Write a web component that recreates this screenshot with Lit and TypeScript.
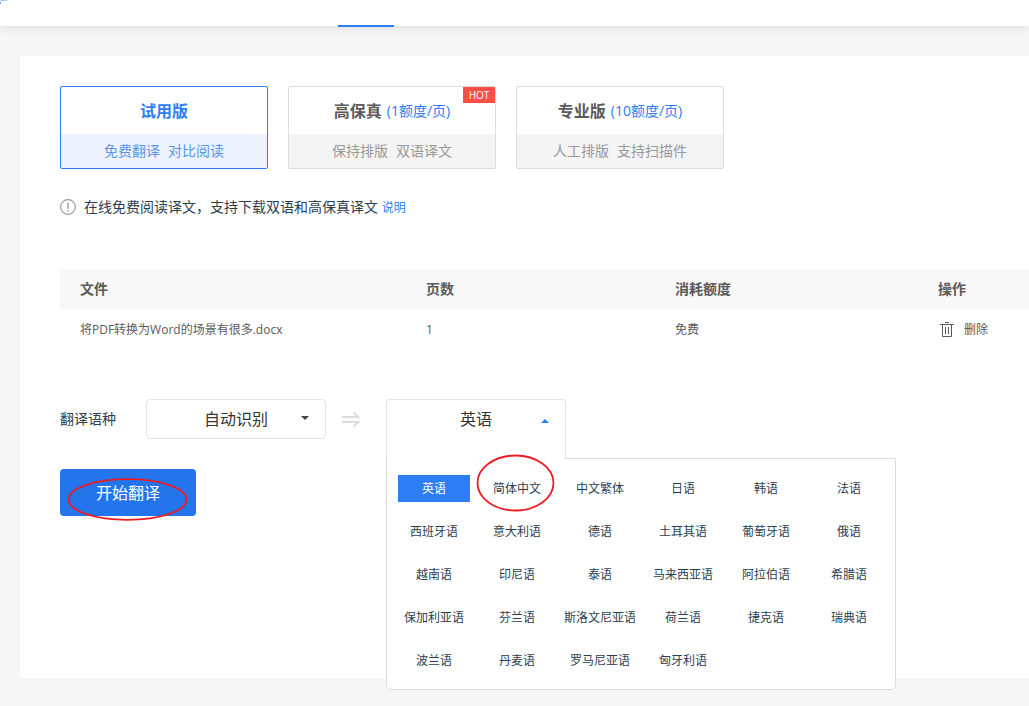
import { LitElement, html, css } from "lit";
import { customElement, state } from "lit/decorators.js";
import { classMap } from "lit/directives/class-map.js";

interface Plan {
  id: string;
  name: string;
  price?: string;
  features: string[];
  hot?: boolean;
}

const PLANS: Plan[] = [
  { id: "trial", name: "试用版", features: ["免费翻译", "对比阅读"] },
  { id: "hifi", name: "高保真", price: "(1额度/页)", features: ["保持排版", "双语译文"], hot: true },
  { id: "pro", name: "专业版", price: "(10额度/页)", features: ["人工排版", "支持扫描件"] },
];

const LANGUAGES = [
  "英语", "简体中文", "中文繁体", "日语", "韩语", "法语",
  "西班牙语", "意大利语", "德语", "土耳其语", "葡萄牙语", "俄语",
  "越南语", "印尼语", "泰语", "马来西亚语", "阿拉伯语", "希腊语",
  "保加利亚语", "芬兰语", "斯洛文尼亚语", "荷兰语", "捷克语", "瑞典语",
  "波兰语", "丹麦语", "罗马尼亚语", "匈牙利语",
];

const base = css`
  *, *::before, *::after { box-sizing: border-box; }
  button, select { font: inherit; color: inherit; margin: 0; padding: 0; cursor: pointer; }
  svg { display: block; flex: none; }
`;

@customElement("plan-picker")
export class PlanPicker extends LitElement {
  @state() private active = "trial";

  static styles = [base, css`
    :host { display: flex; gap: 20px; }
    .card {
      position: relative;
      width: 208px;
      border: 1px solid #ddd;
      border-radius: 2px;
      background: #fff;
      overflow: hidden;
    }
    .title {
      display: flex;
      align-items: center;
      justify-content: center;
      gap: 5px;
      height: 47px;
      font-size: 16px;
      font-weight: 700;
      color: #5a5a5a;
    }
    .price { font-size: 14px; font-weight: 400; color: #2c7df6; }
    .features {
      display: flex;
      align-items: center;
      justify-content: center;
      gap: 8px;
      height: 34px;
      font-size: 14px;
      color: #999;
      background: #f4f4f4;
    }
    .active { border-color: #2c7df6; }
    .active .title { color: #2c7df6; }
    .active .features { color: #5c94ea; background: #edf4ff; }
    .hot {
      position: absolute;
      top: 0;
      right: 0;
      width: 32px;
      height: 16px;
      font-size: 10px;
      line-height: 16px;
      color: #fff;
      background: #fb4f46;
    }
  `];

  render() {
    return PLANS.map((p) => html`
      <button
        class=${classMap({ card: true, active: p.id === this.active })}
        aria-pressed=${p.id === this.active}
        @click=${() => (this.active = p.id)}
      >
        <span class="title">${p.name}${p.price ? html`<span class="price">${p.price}</span>` : ""}</span>
        <span class="features">${p.features.map((f) => html`<span>${f}</span>`)}</span>
        ${p.hot ? html`<span class="hot">HOT</span>` : ""}
      </button>
    `);
  }
}

@customElement("language-menu")
export class LanguageMenu extends LitElement {
  @state() private value = "英语";
  @state() private open = true;

  static styles = [base, css`
    :host { display: block; position: relative; width: 180px; height: 40px; }
    .trigger {
      display: grid;
      grid-template-columns: 1fr auto 1fr;
      align-items: center;
      width: 100%;
      height: 40px;
      font-size: 16px;
      line-height: 38px;
      color: #333;
      background: #fff;
      border: 1px solid #e4e4e4;
      border-radius: 4px;
    }
    .open {
      height: 60px;
      padding-bottom: 22px;
      border-bottom: 0;
      border-radius: 4px 4px 0 0;
    }
    .caption { grid-column: 2; }
    .caret { justify-self: end; margin: 4px 16px 0 0; }
    .menu {
      position: absolute;
      z-index: 1;
      top: 59px;
      left: 0;
      display: grid;
      grid-template-columns: repeat(6, 72px);
      grid-auto-rows: 27px;
      gap: 16px 11px;
      padding: 16px 10px 15px 11px;
      background: #fff;
      border: 1px solid #ddd;
      border-radius: 0 0 5px 5px;
    }
    /* opens the menu's top border below the trigger */
    .menu::before {
      content: "";
      position: absolute;
      top: -1px;
      left: 0;
      width: 178px;
      height: 1px;
      background: #fff;
    }
    .option {
      position: relative;
      border: 0;
      background: none;
      font-size: 12px;
      line-height: 27px;
      color: #2c3e50;
      white-space: nowrap;
    }
    .selected { color: #fff; background: #2c7df6; }
    .ring { position: absolute; top: -21px; left: -5px; pointer-events: none; }
  `];

  private pick(lang: string) {
    this.value = lang;
    this.open = false;
  }

  render() {
    return html`
      <button
        class=${classMap({ trigger: true, open: this.open })}
        aria-haspopup="listbox"
        aria-label="目标语种"
        aria-expanded=${this.open}
        @click=${() => (this.open = !this.open)}
      >
        <span class="caption">${this.value}</span>
        <svg class="caret" width="8" height="4" viewBox="0 0 8 4" aria-hidden="true">
          <path d="M0 4 4 0 8 4z" fill="#2c7df6" />
        </svg>
      </button>
      ${this.open
        ? html`<div class="menu" role="listbox" aria-label="目标语种">
            ${LANGUAGES.map((lang) => html`
              <button
                class=${classMap({ option: true, selected: lang === this.value })}
                role="option"
                aria-selected=${lang === this.value}
                @click=${() => this.pick(lang)}
              >${lang}${lang === "简体中文"
                ? html`<svg class="ring" width="80" height="58" viewBox="0 0 80 58" aria-hidden="true">
                    <ellipse cx="39.5" cy="29" rx="38" ry="27.5" fill="none" stroke="#ec1c24" stroke-width="1.8" />
                  </svg>`
                : ""}</button>
            `)}
          </div>`
        : ""}
    `;
  }
}

@customElement("app-root")
export class AppRoot extends LitElement {
  static styles = [base, css`
    :host {
      display: flex;
      flex-direction: column;
      min-height: 100vh;
      overflow: hidden;
      background: #f6f6f6;
      color: #333;
      font-family: "Open Sans", "Noto Sans CJK SC", sans-serif;
      font-size: 14px;
      line-height: 20px;
    }
    .topbar {
      position: relative;
      display: flex;
      align-items: flex-start;
      height: 26px;
      background: #fff;
      box-shadow: 0 2px 10px rgba(0, 0, 0, 0.1);
    }
    .tab-line {
      position: absolute;
      left: 338px;
      bottom: -1px;
      width: 56px;
      height: 2px;
      background: #2c7df6;
    }
    main { flex: 1; display: flex; padding: 30px 20px 28px; }
    .panel { flex: 1 0 auto; min-width: 1106px; padding: 30px 40px; background: #fff; }
    .notice { display: flex; align-items: center; margin-top: 18px; }
    .notice p { flex: 1; margin: 0 0 0 8px; color: #2c3e50; }
    .notice a { font-size: 12px; color: #2c7df6; text-decoration: none; }
    .add {
      min-width: 142px;
      height: 40px;
      padding: 0 28px;
      font-size: 16px;
      color: #2475eb;
      text-align: left;
      white-space: nowrap;
      background: #fff;
      border: 1px solid #2475eb;
      border-radius: 4px;
    }
    table { width: 100%; margin-top: 42px; table-layout: fixed; border-collapse: collapse; }
    th, td { height: 40px; padding: 0 0 0 20px; text-align: left; color: #5a5a5a; }
    th { font-weight: 700; background: #f8f8f8; }
    td { padding-top: 2px; font-size: 12px; }
    .col-file { width: 346px; }
    .col-pages { width: 249px; }
    .col-cost { width: 263px; }
    .delete { display: flex; align-items: center; gap: 10px; padding-left: 2px; border: 0; background: none; }
    .languages { display: flex; align-items: center; margin-top: 50px; }
    .languages label { margin-right: 30px; color: #2c3e50; }
    .source { position: relative; width: 180px; }
    .source select {
      display: block;
      width: 100%;
      height: 40px;
      appearance: none;
      font-size: 16px;
      color: #333;
      text-align-last: center;
      background: #fff;
      border: 1px solid #e4e4e4;
      border-radius: 4px;
    }
    .source svg { position: absolute; top: 17px; right: 17px; pointer-events: none; }
    .arrow { margin: 0 26px 0 16px; }
    .start {
      position: relative;
      display: block;
      width: 136px;
      height: 47px;
      margin-top: 30px;
      font-size: 16px;
      color: #fff;
      background: #2475eb;
      border: 0;
      border-radius: 4px;
    }
    .ring { position: absolute; top: 9px; left: 7px; pointer-events: none; }
  `];

  render() {
    return html`
      <header class="topbar">
        <svg width="8" height="4" viewBox="0 0 8 4" aria-hidden="true">
          <path d="M0 0h7v1H0z" fill="#a9c9fb" />
          <path d="M0 2h1v2H0z" fill="#6aa5f8" />
        </svg>
        <span class="tab-line"></span>
      </header>
      <main>
        <section class="panel">
          <plan-picker></plan-picker>

          <div class="notice">
            <svg width="16" height="16" viewBox="0 0 16 16" fill="none" aria-hidden="true">
              <circle cx="8" cy="8" r="7.4" stroke="#999" stroke-width="1.1" />
              <path d="M8 3.6v6.2M8 11v1.5" stroke="#999" stroke-width="1.4" />
            </svg>
            <p>在线免费阅读译文，支持下载双语和高保真译文 <a href="#">说明</a></p>
            <button class="add">+ 添加文件</button>
          </div>

          <table>
            <colgroup>
              <col class="col-file" /><col class="col-pages" /><col class="col-cost" /><col />
            </colgroup>
            <thead>
              <tr><th>文件</th><th>页数</th><th>消耗额度</th><th>操作</th></tr>
            </thead>
            <tbody>
              <tr>
                <td>将PDF转换为Word的场景有很多.docx</td>
                <td>1</td>
                <td>免费</td>
                <td>
                  <button class="delete">
                    <svg width="14" height="16" viewBox="0 0 14 16" fill="none" stroke="#5a5a5a" aria-hidden="true">
                      <path d="M5 0.5h4M0 2.5h14M2.5 2.5v12h9v-12M5.5 5v7M8.5 5v7" />
                    </svg>
                    删除
                  </button>
                </td>
              </tr>
            </tbody>
          </table>

          <div class="languages">
            <label for="source">翻译语种</label>
            <div class="source">
              <select id="source"><option>自动识别</option></select>
              <svg width="8" height="4" viewBox="0 0 8 4" aria-hidden="true">
                <path d="M0 0h8L4 4z" fill="#444" />
              </svg>
            </div>
            <svg class="arrow" width="18" height="16" viewBox="0 0 18 16" fill="none" stroke="#dcdcdc" stroke-width="2" aria-hidden="true">
              <path d="M0 6h16.4L11.5 1.4M0 11h16.4L11.5 15.4" />
            </svg>
            <language-menu></language-menu>
          </div>

          <button class="start">
            开始翻译
            <svg class="ring" width="121" height="43" viewBox="0 0 121 43" aria-hidden="true">
              <ellipse cx="60.5" cy="21.5" rx="59" ry="20.3" fill="none" stroke="#ec1c24" stroke-width="1.8" />
            </svg>
          </button>
        </section>
      </main>
    `;
  }
}
